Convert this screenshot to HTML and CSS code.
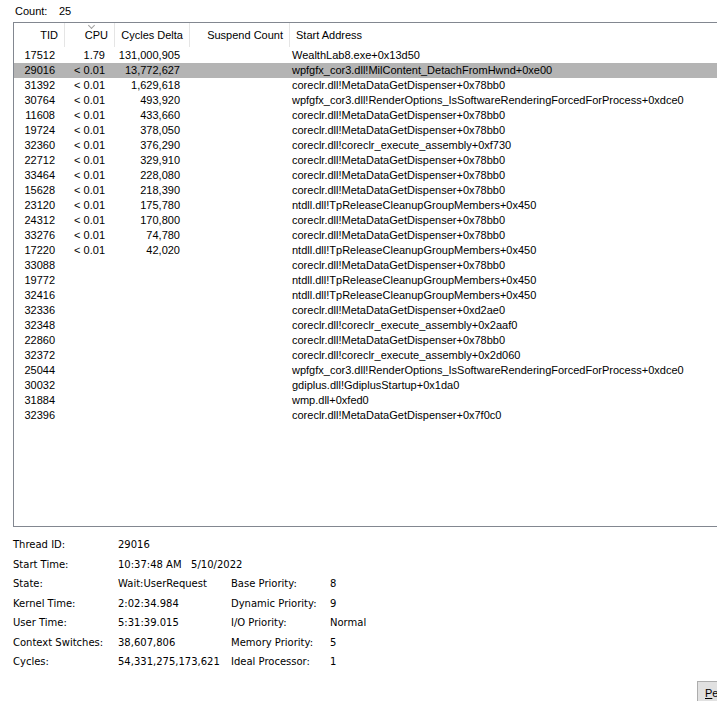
FILE: index.html
```html
<!DOCTYPE html>
<html>
<head>
  <meta charset="UTF-8">
  <title>Threads</title>
  <link rel="stylesheet" href="styles.css">
</head>
<body>
  <div class="count-line"><span class="count-label">Count:</span><span>25</span></div>

  <div class="thread-list">
    <div class="list-header">
      <div class="col num">TID</div>
      <div class="col num sorted">CPU</div>
      <div class="col num">Cycles Delta</div>
      <div class="col num">Suspend Count</div>
      <div class="col addr">Start Address</div>
    </div>
    <div class="list-body">
      <div class="row"><div class="num">17512</div><div class="num">1.79</div><div class="num">131,000,905</div><div class="num"></div><div class="addr">WealthLab8.exe+0x13d50</div></div>
      <div class="row selected"><div class="num">29016</div><div class="num">&lt; 0.01</div><div class="num">13,772,627</div><div class="num"></div><div class="addr">wpfgfx_cor3.dll!MilContent_DetachFromHwnd+0xe00</div></div>
      <div class="row"><div class="num">31392</div><div class="num">&lt; 0.01</div><div class="num">1,629,618</div><div class="num"></div><div class="addr">coreclr.dll!MetaDataGetDispenser+0x78bb0</div></div>
      <div class="row"><div class="num">30764</div><div class="num">&lt; 0.01</div><div class="num">493,920</div><div class="num"></div><div class="addr">wpfgfx_cor3.dll!RenderOptions_IsSoftwareRenderingForcedForProcess+0xdce0</div></div>
      <div class="row"><div class="num">11608</div><div class="num">&lt; 0.01</div><div class="num">433,660</div><div class="num"></div><div class="addr">coreclr.dll!MetaDataGetDispenser+0x78bb0</div></div>
      <div class="row"><div class="num">19724</div><div class="num">&lt; 0.01</div><div class="num">378,050</div><div class="num"></div><div class="addr">coreclr.dll!MetaDataGetDispenser+0x78bb0</div></div>
      <div class="row"><div class="num">32360</div><div class="num">&lt; 0.01</div><div class="num">376,290</div><div class="num"></div><div class="addr">coreclr.dll!coreclr_execute_assembly+0xf730</div></div>
      <div class="row"><div class="num">22712</div><div class="num">&lt; 0.01</div><div class="num">329,910</div><div class="num"></div><div class="addr">coreclr.dll!MetaDataGetDispenser+0x78bb0</div></div>
      <div class="row"><div class="num">33464</div><div class="num">&lt; 0.01</div><div class="num">228,080</div><div class="num"></div><div class="addr">coreclr.dll!MetaDataGetDispenser+0x78bb0</div></div>
      <div class="row"><div class="num">15628</div><div class="num">&lt; 0.01</div><div class="num">218,390</div><div class="num"></div><div class="addr">coreclr.dll!MetaDataGetDispenser+0x78bb0</div></div>
      <div class="row"><div class="num">23120</div><div class="num">&lt; 0.01</div><div class="num">175,780</div><div class="num"></div><div class="addr">ntdll.dll!TpReleaseCleanupGroupMembers+0x450</div></div>
      <div class="row"><div class="num">24312</div><div class="num">&lt; 0.01</div><div class="num">170,800</div><div class="num"></div><div class="addr">coreclr.dll!MetaDataGetDispenser+0x78bb0</div></div>
      <div class="row"><div class="num">33276</div><div class="num">&lt; 0.01</div><div class="num">74,780</div><div class="num"></div><div class="addr">coreclr.dll!MetaDataGetDispenser+0x78bb0</div></div>
      <div class="row"><div class="num">17220</div><div class="num">&lt; 0.01</div><div class="num">42,020</div><div class="num"></div><div class="addr">ntdll.dll!TpReleaseCleanupGroupMembers+0x450</div></div>
      <div class="row"><div class="num">33088</div><div class="num"></div><div class="num"></div><div class="num"></div><div class="addr">coreclr.dll!MetaDataGetDispenser+0x78bb0</div></div>
      <div class="row"><div class="num">19772</div><div class="num"></div><div class="num"></div><div class="num"></div><div class="addr">ntdll.dll!TpReleaseCleanupGroupMembers+0x450</div></div>
      <div class="row"><div class="num">32416</div><div class="num"></div><div class="num"></div><div class="num"></div><div class="addr">ntdll.dll!TpReleaseCleanupGroupMembers+0x450</div></div>
      <div class="row"><div class="num">32336</div><div class="num"></div><div class="num"></div><div class="num"></div><div class="addr">coreclr.dll!MetaDataGetDispenser+0xd2ae0</div></div>
      <div class="row"><div class="num">32348</div><div class="num"></div><div class="num"></div><div class="num"></div><div class="addr">coreclr.dll!coreclr_execute_assembly+0x2aaf0</div></div>
      <div class="row"><div class="num">22860</div><div class="num"></div><div class="num"></div><div class="num"></div><div class="addr">coreclr.dll!MetaDataGetDispenser+0x78bb0</div></div>
      <div class="row"><div class="num">32372</div><div class="num"></div><div class="num"></div><div class="num"></div><div class="addr">coreclr.dll!coreclr_execute_assembly+0x2d060</div></div>
      <div class="row"><div class="num">25044</div><div class="num"></div><div class="num"></div><div class="num"></div><div class="addr">wpfgfx_cor3.dll!RenderOptions_IsSoftwareRenderingForcedForProcess+0xdce0</div></div>
      <div class="row"><div class="num">30032</div><div class="num"></div><div class="num"></div><div class="num"></div><div class="addr">gdiplus.dll!GdiplusStartup+0x1da0</div></div>
      <div class="row"><div class="num">31884</div><div class="num"></div><div class="num"></div><div class="num"></div><div class="addr">wmp.dll+0xfed0</div></div>
      <div class="row"><div class="num">32396</div><div class="num"></div><div class="num"></div><div class="num"></div><div class="addr">coreclr.dll!MetaDataGetDispenser+0x7f0c0</div></div>
    </div>
  </div>

  <div class="details">
    <div class="label">Thread ID:</div><div class="value">29016</div><div></div><div></div>
    <div class="label">Start Time:</div><div class="value wide">10:37:48 AM&nbsp;&nbsp;&nbsp;5/10/2022</div>
    <div class="label">State:</div><div class="value">Wait:UserRequest</div><div class="label">Base Priority:</div><div class="value">8</div>
    <div class="label">Kernel Time:</div><div class="value">2:02:34.984</div><div class="label">Dynamic Priority:</div><div class="value">9</div>
    <div class="label">User Time:</div><div class="value">5:31:39.015</div><div class="label">I/O Priority:</div><div class="value">Normal</div>
    <div class="label">Context Switches:</div><div class="value">38,607,806</div><div class="label">Memory Priority:</div><div class="value">5</div>
    <div class="label">Cycles:</div><div class="value">54,331,275,173,621</div><div class="label">Ideal Processor:</div><div class="value">1</div>
  </div>

  <div class="button-bar">
    <button class="win-btn"><u>P</u>e</button>
  </div>
</body>
</html>
```

FILE: styles.css
```css
* {
  margin: 0;
  padding: 0;
  box-sizing: border-box;
}

html, body {
  height: 100%;
}

body {
  font-family: "Liberation Sans", Arial, sans-serif;
  font-size: 11px;
  color: #000;
  background: #fff;
  overflow: hidden;
  display: flex;
  flex-direction: column;
}

.count-line {
  height: 22px;
  padding: 5px 0 0 15px;
  line-height: 13px;
}

.count-label {
  display: inline-block;
  width: 44px;
}

.thread-list {
  margin-left: 13px;
  height: 505px;
  border: 1px solid #828790;
  border-right: none;
  display: flex;
  flex-direction: column;
}

.list-header,
.row {
  display: grid;
  grid-template-columns: 51px 50px 75px 100px 1fr;
}

.list-header {
  height: 24px;
  line-height: 24px;
  margin-bottom: 1px;
}

.list-header .col {
  border-right: 1px solid #e5e5e5;
  padding: 0 6px;
  position: relative;
  height: 24px;
}

.list-header .col.addr {
  border-right: none;
}

.list-header .sorted::before {
  content: "";
  position: absolute;
  top: 0;
  left: 24px;
  width: 4px;
  height: 4px;
  border-right: 1px solid #a0a0a0;
  border-bottom: 1px solid #a0a0a0;
  transform: rotate(45deg);
}

.row {
  height: 15px;
  line-height: 15px;
  white-space: nowrap;
}

.row > div {
  overflow: hidden;
}

.row > .num {
  padding-right: 10px;
}

.row > .addr {
  padding-left: 2px;
}

.num {
  text-align: right;
}

.addr {
  text-align: left;
}

.row.selected {
  background: #b4b4b4;
}

.details {
  display: grid;
  grid-template-columns: 105px 113px 99px 1fr;
  padding: 8px 0 0 13px;
  font-family: "DejaVu Sans", Tahoma, sans-serif;
  font-size: 10px;
  line-height: 19.5px;
}

.details .wide {
  grid-column: span 3;
}

.button-bar {
  flex: 1;
  display: flex;
  justify-content: flex-end;
  align-items: flex-end;
}

.win-btn {
  width: 20px;
  height: 23px;
  margin-bottom: -3px;
  background: #e1e1e1;
  border: 1px solid #adadad;
  border-right: none;
  font-family: "Liberation Sans", Arial, sans-serif;
  font-size: 11px;
  text-align: left;
  padding-left: 7px;
  overflow: hidden;
  white-space: nowrap;
}
```
